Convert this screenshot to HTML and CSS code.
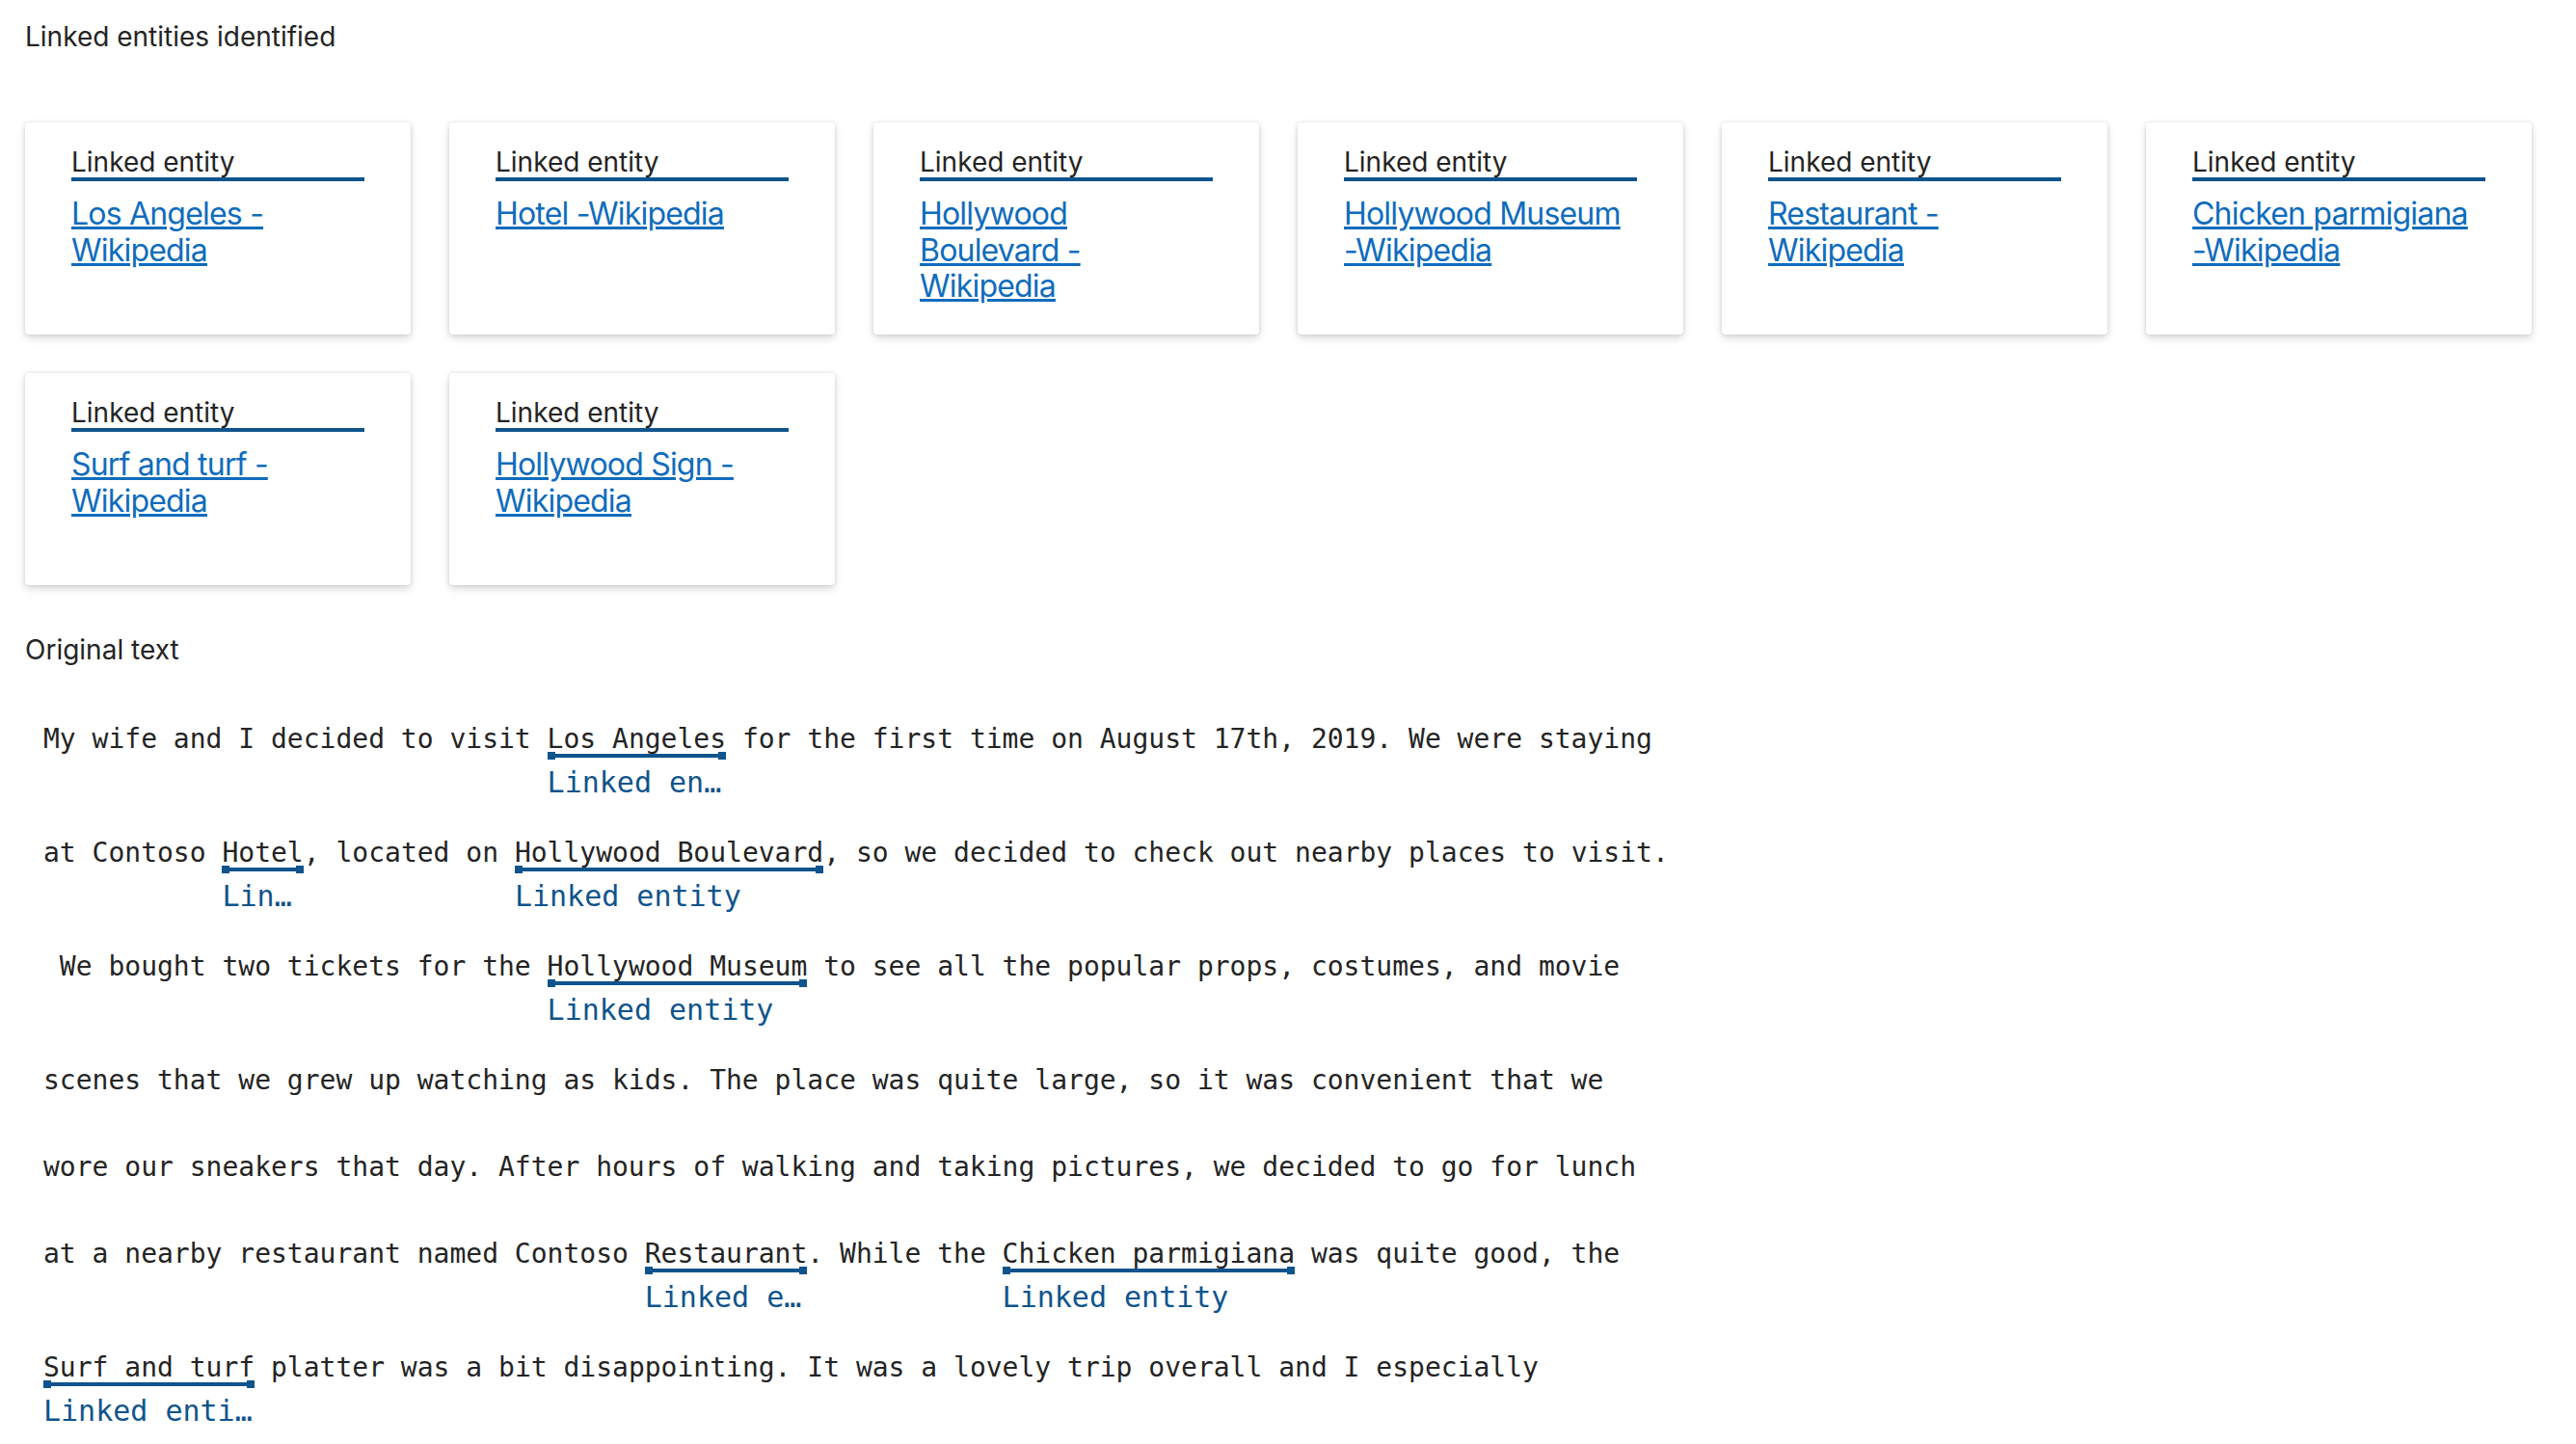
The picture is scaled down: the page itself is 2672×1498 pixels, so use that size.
FILE: index.html
```html
<!DOCTYPE html>
<html lang="en">
<head>
<meta charset="utf-8">
<title>Linked entities</title>
<link rel="stylesheet" href="styles.css">
</head>
<body>
<main class="page">
  <h2 class="section-title">Linked entities identified</h2>
  <div class="cards">
    <div class="card"><div class="card-head">Linked entity</div><a class="card-link" href="#">Los Angeles - Wikipedia</a></div>
    <div class="card"><div class="card-head">Linked entity</div><a class="card-link" href="#">Hotel -Wikipedia</a></div>
    <div class="card"><div class="card-head">Linked entity</div><a class="card-link" href="#">Hollywood Boulevard - Wikipedia</a></div>
    <div class="card"><div class="card-head">Linked entity</div><a class="card-link" href="#">Hollywood Museum -Wikipedia</a></div>
    <div class="card"><div class="card-head">Linked entity</div><a class="card-link" href="#">Restaurant - Wikipedia</a></div>
    <div class="card"><div class="card-head">Linked entity</div><a class="card-link" href="#">Chicken parmigiana -Wikipedia</a></div>
    <div class="card"><div class="card-head">Linked entity</div><a class="card-link" href="#">Surf and turf - Wikipedia</a></div>
    <div class="card"><div class="card-head">Linked entity</div><a class="card-link" href="#">Hollywood Sign - Wikipedia</a></div>
  </div>

  <h2 class="section-title original">Original text</h2>
  <div class="text">
    <div class="line"><span class="plain">My wife and I decided to visit </span><span class="ent"><span class="ent-text">Los Angeles</span><span class="bar"></span><span class="label">Linked entity</span></span><span class="plain"> for the first time on August 17th, 2019. We were staying</span></div>
    <div class="line"><span class="plain">at Contoso </span><span class="ent"><span class="ent-text">Hotel</span><span class="bar"></span><span class="label">Linked entity</span></span><span class="plain">, located on </span><span class="ent"><span class="ent-text">Hollywood Boulevard</span><span class="bar"></span><span class="label">Linked entity</span></span><span class="plain">, so we decided to check out nearby places to visit.</span></div>
    <div class="line"><span class="plain"> We bought two tickets for the </span><span class="ent"><span class="ent-text">Hollywood Museum</span><span class="bar"></span><span class="label">Linked entity</span></span><span class="plain"> to see all the popular props, costumes, and movie</span></div>
    <div class="line"><span class="plain">scenes that we grew up watching as kids. The place was quite large, so it was convenient that we</span></div>
    <div class="line"><span class="plain">wore our sneakers that day. After hours of walking and taking pictures, we decided to go for lunch</span></div>
    <div class="line"><span class="plain">at a nearby restaurant named Contoso </span><span class="ent"><span class="ent-text">Restaurant</span><span class="bar"></span><span class="label">Linked entity</span></span><span class="plain">. While the </span><span class="ent"><span class="ent-text">Chicken parmigiana</span><span class="bar"></span><span class="label">Linked entity</span></span><span class="plain"> was quite good, the</span></div>
    <div class="line"><span class="ent"><span class="ent-text">Surf and turf</span><span class="bar"></span><span class="label">Linked entity</span></span><span class="plain"> platter was a bit disappointing. It was a lovely trip overall and I especially</span></div>
  </div>
</main>
</body>
</html>
```

FILE: styles.css
```css
* { box-sizing: border-box; }

html, body {
  margin: 0;
  background: #ffffff;
}

body {
  font-family: Inter, "Noto Sans", "Liberation Sans", sans-serif;
  color: #242424;
}

.page {
  padding: 18px 26px 40px 26px;
}

.section-title {
  margin: 0;
  font-size: 28px;
  line-height: 40px;
  font-weight: 400;
  color: #242424;
}

.cards {
  display: flex;
  flex-wrap: wrap;
  gap: 40px;
  margin-top: 69px;
}

.card {
  width: 400px;
  height: 220px;
  padding: 24px 48px;
  background: #ffffff;
  border-radius: 4px;
  box-shadow: 0 0 4px rgba(0, 0, 0, 0.12), 0 4px 8px rgba(0, 0, 0, 0.14);
}

.card-head {
  padding-top: 2px;
  font-size: 28px;
  line-height: 31px;
  color: #242424;
  border-bottom: 4px solid #0f548c;
}

.card-link {
  display: block;
  margin-top: 15px;
  font-size: 32px;
  line-height: 37.5px;
  letter-spacing: -0.8px;
  color: #0f6cbd;
  text-decoration: underline;
}

.original {
  margin-top: 47px;
}

.text {
  margin-top: 60px;
  padding-left: 19px;
  font-family: "DejaVu Sans Mono", "Liberation Mono", monospace;
  font-size: 28px;
  color: #242424;
}

.line {
  display: flex;
  align-items: flex-start;
  white-space: pre;
  min-height: 50px;
  margin-bottom: 40px;
}

.plain,
.ent-text {
  line-height: 26px;
}

.ent {
  display: inline-flex;
  flex-direction: column;
}

.bar {
  position: relative;
  height: 8px;
}

.bar::before {
  content: "";
  display: block;
  margin-top: 2px;
  height: 4px;
  background: #0f548c;
}

.bar::after {
  content: "";
  position: absolute;
  left: 0;
  right: 0;
  top: 0;
  height: 8px;
  border-left: 8px solid #0f548c;
  border-right: 8px solid #0f548c;
}

.label {
  width: 0;
  min-width: 100%;
  margin-top: 4px;
  font-size: 30px;
  line-height: 40px;
  color: #0f548c;
  white-space: nowrap;
  overflow: hidden;
  text-overflow: ellipsis;
}
```
